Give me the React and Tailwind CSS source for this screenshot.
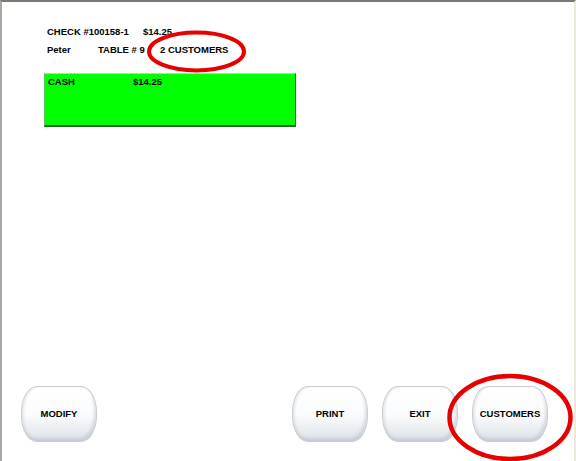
import React from "react";

function Btn({ label }) {
  return (
    <div className="w-[76px] h-[56px] rounded-[16px/26px] border border-[#c8cdd2] bg-gradient-to-b from-white via-[#fbfcfd] to-[#dde2e8] shadow-[inset_-2px_-3px_3px_rgba(160,170,180,0.35),inset_2px_0_2px_rgba(200,205,210,0.4)] flex items-center justify-center">
      <span className="text-[9.5px] font-bold text-black">{label}</span>
    </div>
  );
}

export default function App() {
  return (
    <div
      className="relative w-[576px] h-[461px] bg-white border-t-2 border-t-[#7a7a76] border-l-2 border-l-[#a8a8a0] border-r-2 border-r-[#ece9d8] flex flex-col overflow-hidden"
      style={{ fontFamily: '"Liberation Sans", Arial, sans-serif' }}
    >
      <div className="pl-[45px] pt-[24px] text-[9.5px] font-bold text-black leading-[12px]">
        <div className="flex">
          <span className="w-[96px]">CHECK #100158-1</span>
          <span>$14.25</span>
        </div>
        <div className="flex mt-[6px]">
          <span className="w-[51px]">Peter</span>
          <span className="w-[62px]">TABLE # 9</span>
          <span>2 CUSTOMERS</span>
        </div>
      </div>

      <div className="ml-[42px] mt-[17px] w-[252px] h-[54px] bg-[#00ff00] border-t border-l border-t-[#7fff7f] border-l-[#50d050] border-b-2 border-r border-b-[#206020] border-r-[#306030] flex text-[9.5px] font-bold leading-[12px] pt-[2px]">
        <span className="ml-[3px] w-[85px]">CASH</span>
        <span>$14.25</span>
      </div>

      <div className="mt-auto flex items-end pl-[19px] pr-[26px] pb-[19px]">
        <Btn label="MODIFY" />
        <div className="ml-auto flex gap-[14px]">
          <Btn label="PRINT" />
          <Btn label="EXIT" />
          <Btn label="CUSTOMERS" />
        </div>
      </div>

      <svg className="absolute left-[144px] top-[27px] pointer-events-none" width="101" height="45" viewBox="0 0 101 45">
        <ellipse cx="50.5" cy="22.5" rx="47.5" ry="19" fill="none" stroke="#e60000" strokeWidth="4" />
      </svg>
      <svg className="absolute left-[443px] top-[370px] pointer-events-none" width="130" height="91" viewBox="0 0 130 91">
        <ellipse cx="65" cy="45.5" rx="60.5" ry="41.5" fill="none" stroke="#e60000" strokeWidth="4.5" />
      </svg>
    </div>
  );
}
